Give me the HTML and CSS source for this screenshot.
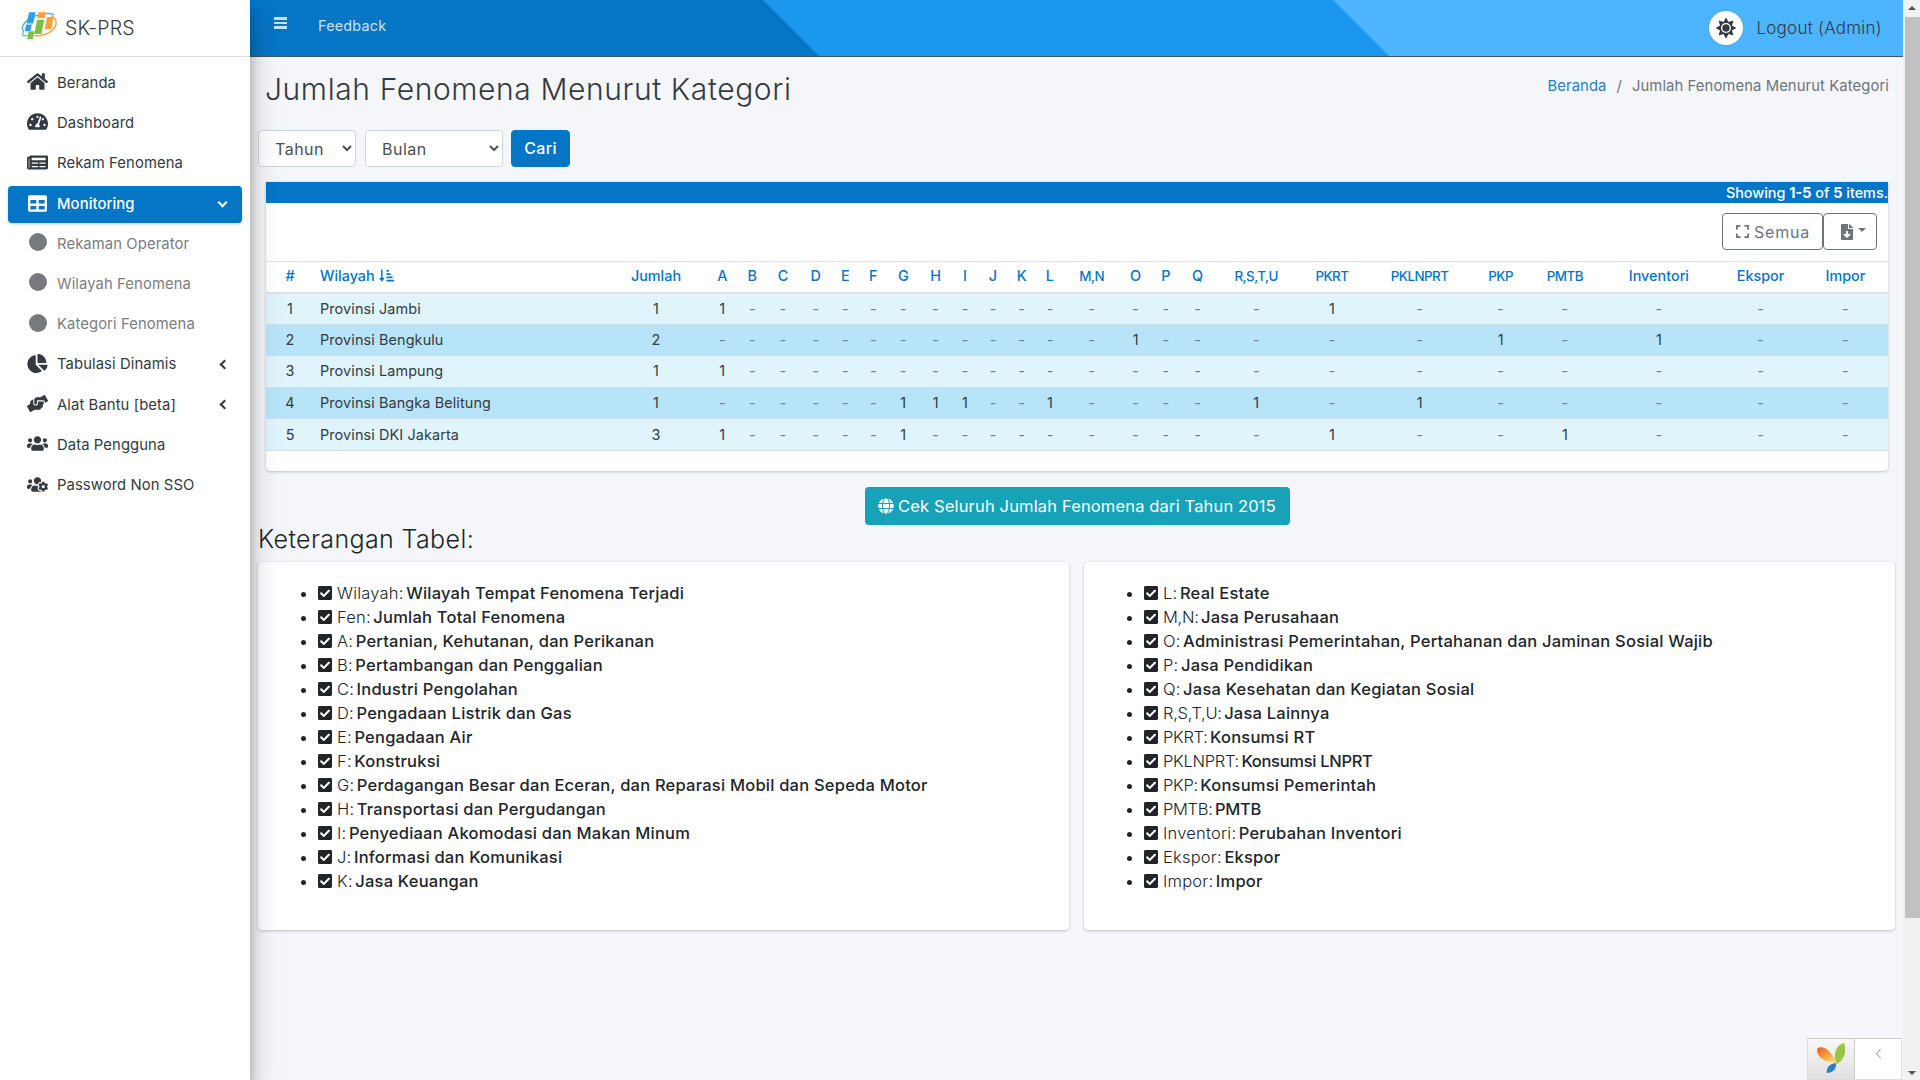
FILE: index.html
```html
<!DOCTYPE html>
<html lang="id">
<head>
<meta charset="utf-8">
<title>Jumlah Fenomena Menurut Kategori</title>
<link rel="stylesheet" href="styles.css">
</head>
<body>
<svg class="defs" aria-hidden="true">
<symbol id="i-home" viewBox="0 0 576 512"><path d="M280.37 148.26L96 300.11V464a16 16 0 0 0 16 16l112.06-.29a16 16 0 0 0 15.92-16V368a16 16 0 0 1 16-16h64a16 16 0 0 1 16 16v95.64a16 16 0 0 0 16 16.05L464 480a16 16 0 0 0 16-16V300L295.67 148.26a12.19 12.19 0 0 0-15.3 0zM571.6 251.47L488 182.56V44.05a12 12 0 0 0-12-12h-56a12 12 0 0 0-12 12v72.61L318.47 43a48 48 0 0 0-61 0L4.34 251.47a12 12 0 0 0-1.6 16.9l25.5 31A12 12 0 0 0 45.15 301l235.22-193.74a12.19 12.19 0 0 1 15.3 0L530.9 301a12 12 0 0 0 16.9-1.6l25.5-31a12 12 0 0 0-1.7-16.93z"/></symbol>
<symbol id="i-dash" viewBox="0 0 576 512"><path d="M288 32C128.94 32 0 160.94 0 320c0 52.8 14.25 102.26 39.06 144.8 5.61 9.62 16.3 15.2 27.44 15.2h443c11.14 0 21.83-5.58 27.44-15.2C561.75 422.26 576 372.8 576 320c0-159.06-128.94-288-288-288zm0 64c14.71 0 26.58 10.13 30.32 23.65-1.11 2.26-2.64 4.23-3.45 6.67l-9.22 27.67c-5.13 3.49-10.97 6.01-17.64 6.01-17.67 0-32-14.33-32-32S270.33 96 288 96zM96 384c-17.67 0-32-14.33-32-32s14.33-32 32-32 32 14.33 32 32-14.33 32-32 32zm48-160c-17.67 0-32-14.33-32-32s14.33-32 32-32 32 14.33 32 32-14.33 32-32 32zm246.77-72.41l-61.33 184C343.13 347.33 352 364.54 352 384c0 11.72-3.38 22.55-8.88 32H232.88c-5.5-9.45-8.88-20.28-8.88-32 0-33.94 26.5-61.43 59.9-63.59l61.34-184.01c4.17-12.56 17.73-19.45 30.36-15.17 12.57 4.19 19.35 17.79 15.17 30.36zm14.66 57.2l15.52-46.55c3.47-1.29 7.13-2.23 11.05-2.23 17.67 0 32 14.33 32 32s-14.33 32-32 32c-11.38-.01-20.89-6.28-26.57-15.22zM480 384c-17.67 0-32-14.33-32-32s14.33-32 32-32 32 14.33 32 32-14.33 32-32 32z"/></symbol>
<symbol id="i-news" viewBox="0 0 576 512"><path d="M552 64H88c-13.255 0-24 10.745-24 24v8H24c-13.255 0-24 10.745-24 24v272c0 30.928 25.072 56 56 56h472c26.51 0 48-21.49 48-48V88c0-13.255-10.745-24-24-24zM56 400a8 8 0 0 1-8-8V144h16v248a8 8 0 0 1-8 8zm236-16H140c-6.627 0-12-5.373-12-12v-8c0-6.627 5.373-12 12-12h152c6.627 0 12 5.373 12 12v8c0 6.627-5.373 12-12 12zm208 0H348c-6.627 0-12-5.373-12-12v-8c0-6.627 5.373-12 12-12h152c6.627 0 12 5.373 12 12v8c0 6.627-5.373 12-12 12zm-208-96H140c-6.627 0-12-5.373-12-12v-8c0-6.627 5.373-12 12-12h152c6.627 0 12 5.373 12 12v8c0 6.627-5.373 12-12 12zm208 0H348c-6.627 0-12-5.373-12-12v-8c0-6.627 5.373-12 12-12h152c6.627 0 12 5.373 12 12v8c0 6.627-5.373 12-12 12zm0-96H140c-6.627 0-12-5.373-12-12v-40c0-6.627 5.373-12 12-12h360c6.627 0 12 5.373 12 12v40c0 6.627-5.373 12-12 12z"/></symbol>
<symbol id="i-table" viewBox="0 0 512 512"><path d="M464 32H48C21.49 32 0 53.49 0 80v352c0 26.51 21.49 48 48 48h416c26.51 0 48-21.49 48-48V80c0-26.51-21.49-48-48-48zM224 416H64v-96h160v96zm0-160H64v-96h160v96zm224 160H288v-96h160v96zm0-160H288v-96h160v96z"/></symbol>
<symbol id="i-pie" viewBox="0 0 544 512"><path d="M527.79 288H290.5l158.03 158.03c6.04 6.04 15.98 6.53 22.19.68 38.7-36.46 65.32-85.61 73.13-140.86 1.34-9.46-6.51-17.85-16.06-17.85zm-15.83-64.8C503.72 103.74 408.26 8.28 288.8.04 279.68-.59 272 7.1 272 16.24V240h223.77c9.14 0 16.82-7.68 16.19-16.8zM224 288V50.71c0-9.55-8.39-17.4-17.84-16.06C86.99 51.49-4.1 155.6.14 280.37 4.5 408.51 114.83 513.59 243.03 511.98c50.4-.63 96.97-16.87 135.26-44.03 7.9-5.6 8.42-17.23 1.57-24.08L224 288z"/></symbol>
<symbol id="i-hands" viewBox="0 0 640 512"><path d="M488 192H336v56c0 39.7-32.3 72-72 72s-72-32.3-72-72V126.4l-64.9 39C107.8 176.9 96 197.8 96 220.2v47.3l-80 46.2C.7 322.5-4.6 342.1 4.3 357.4l80 138.6c8.8 15.3 28.4 20.5 43.7 11.7L231.4 448H368c35.3 0 64-28.7 64-64h16c17.7 0 32-14.3 32-32v-64h8c13.3 0 24-10.7 24-24v-48c0-13.3-10.7-24-24-24zm147.7-37.4L555.7 16C546.9.7 527.3-4.5 512 4.3L408.6 64H306.4c-12 0-23.7 3.4-33.9 9.7L239 94.6c-9.4 5.8-15 16.1-15 27.1V248c0 22.1 17.9 40 40 40s40-17.9 40-40v-88h184c30.9 0 56 25.1 56 56v28.5l80-46.2c15.3-8.9 20.5-28.4 11.7-43.7z"/></symbol>
<symbol id="i-users" viewBox="0 0 640 512"><path d="M96 224c35.3 0 64-28.7 64-64s-28.7-64-64-64-64 28.7-64 64 28.7 64 64 64zm448 0c35.3 0 64-28.7 64-64s-28.7-64-64-64-64 28.7-64 64 28.7 64 64 64zm32 32h-64c-17.6 0-33.5 7.1-45.1 18.6 40.3 22.1 68.9 62 75.1 109.4h66c17.7 0 32-14.3 32-32v-32c0-35.3-28.7-64-64-64zm-256 0c61.9 0 112-50.1 112-112S381.9 32 320 32 208 82.1 208 144s50.1 112 112 112zm76.8 32h-8.3c-20.8 10-43.9 16-68.5 16s-47.6-6-68.5-16h-8.3C179.6 288 128 339.6 128 403.2V432c0 26.5 21.5 48 48 48h288c26.5 0 48-21.5 48-48v-28.8c0-63.6-51.6-115.2-115.2-115.2zm-223.7-13.4C161.5 263.1 145.6 256 128 256H64c-35.3 0-64 28.7-64 64v32c0 17.7 14.3 32 32 32h65.9c6.3-47.4 34.9-87.3 75.2-109.4z"/></symbol>
<symbol id="i-ucog" viewBox="0 0 640 512"><path d="M610.5 341.3c2.6-14.1 2.6-28.5 0-42.6l25.8-14.9c3-1.7 4.3-5.2 3.3-8.5-6.7-21.6-18.2-41.2-33.2-57.4-2.3-2.5-6-3.1-9-1.4l-25.8 14.9c-10.9-9.3-23.4-16.5-36.9-21.3v-29.8c0-3.4-2.4-6.4-5.7-7.1-22.3-5-45-4.8-66.2 0-3.3.7-5.7 3.7-5.7 7.1v29.8c-13.5 4.8-26 12-36.9 21.3l-25.8-14.9c-2.9-1.7-6.7-1.1-9 1.4-15 16.2-26.5 35.8-33.2 57.4-1 3.3.4 6.8 3.3 8.5l25.8 14.9c-2.6 14.1-2.6 28.5 0 42.6l-25.8 14.9c-3 1.7-4.3 5.2-3.3 8.5 6.7 21.6 18.2 41.1 33.2 57.4 2.3 2.5 6 3.1 9 1.4l25.8-14.9c10.9 9.3 23.4 16.5 36.9 21.3v29.8c0 3.4 2.4 6.4 5.7 7.1 22.3 5 45 4.8 66.2 0 3.3-.7 5.7-3.7 5.7-7.1v-29.8c13.5-4.8 26-12 36.9-21.3l25.8 14.9c2.9 1.7 6.7 1.1 9-1.4 15-16.2 26.5-35.8 33.2-57.4 1-3.3-.4-6.8-3.3-8.5l-25.8-14.9zM496 368.5c-26.8 0-48.5-21.8-48.5-48.5s21.8-48.5 48.5-48.5 48.5 21.8 48.5 48.5-21.7 48.5-48.5 48.5zM96 224c35.3 0 64-28.7 64-64s-28.7-64-64-64-64 28.7-64 64 28.7 64 64 64zm224 32c1.9 0 3.7-.5 5.6-.6 8.3-21.7 20.5-42.1 36.3-59.2 7.4-8 17.9-12.6 28.9-12.6 6.9 0 13.7 1.8 19.6 5.3l7.9 4.6c.8-.5 1.6-.9 2.4-1.4 7-14.6 11.2-30.8 11.2-48 0-61.9-50.1-112-112-112S208 82.1 208 144c0 61.9 50.1 112 112 112zm105.2 194.5c-2.3-1.2-4.6-2.6-6.8-3.9-8.2 4.8-15.3 9.8-27.5 9.8-10.9 0-21.4-4.6-28.9-12.6-18.3-19.8-32.3-43.9-40.2-69.6-10.7-34.5 24.9-49.7 25.8-50.3-.1-2.6-.1-5.2 0-7.8l-7.9-4.6c-3.8-2.2-7-5-9.8-8.1-3.3.2-6.5.6-9.8.6-24.6 0-47.6-6-68.5-16h-8.3C179.6 288 128 339.6 128 403.2V432c0 26.5 21.5 48 48 48h255.4c-3.7-6-6.2-12.8-6.2-20.3v-9.2zM173.1 274.6C161.5 263.1 145.6 256 128 256H64c-35.3 0-64 28.7-64 64v32c0 17.7 14.3 32 32 32h65.9c6.3-47.4 34.9-87.3 75.2-109.4z"/></symbol>
<symbol id="i-sun" viewBox="0 0 512 512"><path d="M256 160c-52.9 0-96 43.1-96 96s43.1 96 96 96 96-43.1 96-96-43.1-96-96-96zm246.4 80.5l-94.7-47.3 33.5-100.4c4.5-13.6-8.4-26.5-21.9-21.9l-100.4 33.5-47.4-94.8c-6.4-12.8-24.6-12.8-31 0l-47.3 94.7L92.7 70.8c-13.6-4.5-26.5 8.4-21.9 21.9l33.5 100.4-94.7 47.4c-12.8 6.4-12.8 24.6 0 31l94.7 47.3-33.5 100.5c-4.5 13.6 8.4 26.5 21.9 21.9l100.4-33.5 47.3 94.7c6.4 12.8 24.6 12.8 31 0l47.3-94.7 100.4 33.5c13.6 4.5 26.5-8.4 21.9-21.9l-33.5-100.4 94.7-47.3c13-6.5 13-24.7.2-31.1zm-155.9 106c-49.9 49.9-131.1 49.9-181 0-49.9-49.9-49.9-131.1 0-181 49.9-49.9 131.1-49.9 181 0 49.9 49.9 49.9 131.1 0 181z"/></symbol>
<symbol id="i-check" viewBox="0 0 448 512"><path d="M400 480H48c-26.51 0-48-21.49-48-48V80c0-26.51 21.49-48 48-48h352c26.51 0 48 21.49 48 48v352c0 26.51-21.49 48-48 48zm-204.686-98.059l184-184c6.248-6.248 6.248-16.379 0-22.627l-22.627-22.627c-6.248-6.248-16.379-6.249-22.628 0L184 302.745l-70.059-70.059c-6.248-6.248-16.379-6.248-22.628 0l-22.627 22.627c-6.248 6.248-6.248 16.379 0 22.627l104 104c6.249 6.25 16.379 6.25 22.628.001z"/></symbol>
<symbol id="i-globe" viewBox="0 0 496 512"><path d="M336.5 160C322 70.7 287.8 8 248 8s-74 62.7-88.5 152h177zM152 256c0 22.2 1.2 43.5 3.3 64h185.3c2.1-20.5 3.3-41.8 3.3-64s-1.2-43.5-3.3-64H155.3c-2.1 20.5-3.3 41.8-3.3 64zm324.7-96c-28.6-67.9-86.5-120.4-158-141.6 24.4 33.8 41.2 84.7 50 141.6h108zM177.2 18.4C105.8 39.6 47.8 92.1 19.3 160h108c8.7-56.9 25.5-107.8 49.9-141.6zM487.4 192H372.7c2.1 21 3.3 42.5 3.3 64s-1.2 43-3.3 64h114.6c5.5-20.5 8.6-41.8 8.6-64s-3.1-43.5-8.5-64zM120 256c0-21.5 1.2-43 3.3-64H8.6C3.2 212.5 0 233.8 0 256s3.2 43.5 8.6 64h114.6c-2-21-3.2-42.5-3.2-64zm39.5 96c14.5 89.3 48.7 152 88.5 152s74-62.7 88.5-152h-177zm159.3 141.6c71.4-21.2 129.4-73.7 158-141.6h-108c-8.8 56.9-25.6 107.8-50 141.6zM19.3 352c28.6 67.9 86.5 120.4 158 141.6-24.4-33.8-41.2-84.7-50-141.6h-108z"/></symbol>
<symbol id="i-expand" viewBox="0 0 448 512"><path d="M0 180V56c0-13.3 10.7-24 24-24h124c6.6 0 12 5.4 12 12v40c0 6.6-5.4 12-12 12H64v84c0 6.6-5.4 12-12 12H12c-6.6 0-12-5.4-12-12zM288 44v40c0 6.6 5.4 12 12 12h84v84c0 6.6 5.4 12 12 12h40c6.6 0 12-5.4 12-12V56c0-13.3-10.7-24-24-24H300c-6.6 0-12 5.4-12 12zm148 276h-40c-6.6 0-12 5.4-12 12v84h-84c-6.6 0-12 5.4-12 12v40c0 6.6 5.4 12 12 12h124c13.3 0 24-10.7 24-24V332c0-6.6-5.4-12-12-12zM160 468v-40c0-6.6-5.4-12-12-12H64v-84c0-6.6-5.4-12-12-12H12c-6.6 0-12 5.4-12 12v124c0 13.3 10.7 24 24 24h124c6.6 0 12-5.4 12-12z"/></symbol>
<symbol id="i-file" viewBox="0 0 384 512"><path d="M224 136V0H24C10.7 0 0 10.7 0 24v464c0 13.3 10.7 24 24 24h336c13.3 0 24-10.7 24-24V160H248c-13.2 0-24-10.8-24-24zm76.45 211.36l-96.42 95.7c-6.65 6.61-17.39 6.61-24.04 0l-96.42-95.7C73.42 337.29 80.54 320 94.82 320H160v-80c0-8.84 7.16-16 16-16h32c8.84 0 16 7.16 16 16v80h65.18c14.28 0 21.4 17.29 11.27 27.36zM377 105L279.1 7c-4.5-4.5-10.6-7-17-7H256v128h128v-6.1c0-6.3-2.5-12.4-7-16.9z"/></symbol>
<linearGradient id="yii-petal" x1="0" y1="0" x2="1" y2="1"><stop offset="0" stop-color="#e8592b"/><stop offset=".55" stop-color="#f7a63f"/><stop offset="1" stop-color="#fde38a"/></linearGradient>
</svg>

<aside class="sidebar">
  <a class="brand">
    <svg class="logo" viewBox="0 0 40 30">
      <path d="M4 22 C-2 14 12 4 27 2.500 C32 2 35 3 36 4" fill="none" stroke="#4db3ea" stroke-width="1.500"/>
      <path d="M8 25 C3 27 1 25 4 22" fill="none" stroke="#4db3ea" stroke-width="1.300"/>
      <path d="M15 26 C27 26 39 20 38 11 C37.800 8 36 6 33 4.500" fill="none" stroke="#f3a640" stroke-width="1.500"/>
      <path d="M9.500 1H16.500L13.800 13H7z" fill="#2f9fe6"/>
      <path d="M6.500 14H12.500L11 21H5z" fill="#2f9fe6"/>
      <path d="M19.500 1H27.500L26.200 7H18.200z" fill="#f4a23c"/>
      <path d="M28.500 6H35.500L33 19H26z" fill="#f4a23c"/>
      <path d="M18 9H25.500L22.500 24H15z" fill="#7cc142"/>
      <path d="M9 21H15L13.500 29.500H7.500z" fill="#7cc142"/>
    </svg>
    <span class="brand-text">SK-PRS</span>
  </a>
  <nav class="nav">
    <a class="nav-link"><svg class="nav-icon"><use href="#i-home"/></svg><span>Beranda</span></a>
    <a class="nav-link"><svg class="nav-icon"><use href="#i-dash"/></svg><span>Dashboard</span></a>
    <a class="nav-link"><svg class="nav-icon"><use href="#i-news"/></svg><span>Rekam Fenomena</span></a>
    <a class="nav-link active"><svg class="nav-icon"><use href="#i-table"/></svg><span>Monitoring</span><i class="chev chev-down"></i></a>
    <a class="nav-link sub"><i class="dot"></i><span>Rekaman Operator</span></a>
    <a class="nav-link sub"><i class="dot"></i><span>Wilayah Fenomena</span></a>
    <a class="nav-link sub"><i class="dot"></i><span>Kategori Fenomena</span></a>
    <a class="nav-link"><svg class="nav-icon"><use href="#i-pie"/></svg><span>Tabulasi Dinamis</span><i class="chev chev-left"></i></a>
    <a class="nav-link"><svg class="nav-icon"><use href="#i-hands"/></svg><span>Alat Bantu [beta]</span><i class="chev chev-left"></i></a>
    <a class="nav-link"><svg class="nav-icon"><use href="#i-users"/></svg><span>Data Pengguna</span></a>
    <a class="nav-link"><svg class="nav-icon"><use href="#i-ucog"/></svg><span>Password Non SSO</span></a>
  </nav>
</aside>

<div class="main">
  <header class="topbar">
    <div class="topbar-left">
      <span class="bars"><i></i><i></i><i></i></span>
      <a class="feedback">Feedback</a>
    </div>
    <div class="topbar-right">
      <span class="sun"><svg><use href="#i-sun"/></svg></span>
      <a class="logout">Logout (Admin)</a>
    </div>
  </header>

  <main class="content">
    <div class="page-head">
      <h1>Jumlah Fenomena Menurut Kategori</h1>
      <div class="crumbs"><a>Beranda</a><span class="sep">/</span><span>Jumlah Fenomena Menurut Kategori</span></div>
    </div>

    <form class="filter">
      <select class="sel sel-year"><option>Tahun</option></select>
      <select class="sel sel-month"><option>Bulan</option></select>
      <button type="button" class="btn-cari">Cari</button>
    </form>

    <section class="grid-card">
      <div class="summary">Showing <b>1-5</b> of <b>5</b> items.</div>
      <div class="toolbar">
        <button type="button" class="tool tool-all"><svg class="tool-ic"><use href="#i-expand"/></svg>Semua</button>
        <button type="button" class="tool tool-exp"><svg class="tool-file"><use href="#i-file"/></svg><i class="caret"></i></button>
      </div>
      <table class="data">
        <colgroup><col><col><col><col><col><col><col><col><col><col><col><col><col><col><col><col><col><col><col><col><col><col><col><col><col><col><col></colgroup>
        <thead><tr><th>#</th><th class="left">Wilayah <svg class="sort" viewBox="0 0 16 14"><path d="M3 0.500V12M0.800 9.500L3 12.500L5.200 9.500" fill="none" stroke="currentColor" stroke-width="1.600"/><path d="M8 1h2.500v2H8zM8 4.500h4.500v2H8zM8 8h6.500v2H8zM8 11.500h8v2H8z"/></svg></th><th>Jumlah</th><th>A</th><th>B</th><th>C</th><th>D</th><th>E</th><th>F</th><th>G</th><th>H</th><th>I</th><th>J</th><th>K</th><th>L</th><th class="caps">M,N</th><th>O</th><th>P</th><th>Q</th><th class="caps">R,S,T,U</th><th class="caps">PKRT</th><th class="caps">PKLNPRT</th><th class="caps">PKP</th><th class="caps">PMTB</th><th>Inventori</th><th>Ekspor</th><th>Impor</th></tr></thead>
        <tbody>
          <tr><td>1</td><td class="left">Provinsi Jambi</td><td>1</td><td>1</td><td class="nil">-</td><td class="nil">-</td><td class="nil">-</td><td class="nil">-</td><td class="nil">-</td><td class="nil">-</td><td class="nil">-</td><td class="nil">-</td><td class="nil">-</td><td class="nil">-</td><td class="nil">-</td><td class="nil">-</td><td class="nil">-</td><td class="nil">-</td><td class="nil">-</td><td class="nil">-</td><td>1</td><td class="nil">-</td><td class="nil">-</td><td class="nil">-</td><td class="nil">-</td><td class="nil">-</td><td class="nil">-</td></tr>
          <tr><td>2</td><td class="left">Provinsi Bengkulu</td><td>2</td><td class="nil">-</td><td class="nil">-</td><td class="nil">-</td><td class="nil">-</td><td class="nil">-</td><td class="nil">-</td><td class="nil">-</td><td class="nil">-</td><td class="nil">-</td><td class="nil">-</td><td class="nil">-</td><td class="nil">-</td><td class="nil">-</td><td>1</td><td class="nil">-</td><td class="nil">-</td><td class="nil">-</td><td class="nil">-</td><td class="nil">-</td><td>1</td><td class="nil">-</td><td>1</td><td class="nil">-</td><td class="nil">-</td></tr>
          <tr><td>3</td><td class="left">Provinsi Lampung</td><td>1</td><td>1</td><td class="nil">-</td><td class="nil">-</td><td class="nil">-</td><td class="nil">-</td><td class="nil">-</td><td class="nil">-</td><td class="nil">-</td><td class="nil">-</td><td class="nil">-</td><td class="nil">-</td><td class="nil">-</td><td class="nil">-</td><td class="nil">-</td><td class="nil">-</td><td class="nil">-</td><td class="nil">-</td><td class="nil">-</td><td class="nil">-</td><td class="nil">-</td><td class="nil">-</td><td class="nil">-</td><td class="nil">-</td><td class="nil">-</td></tr>
          <tr><td>4</td><td class="left">Provinsi Bangka Belitung</td><td>1</td><td class="nil">-</td><td class="nil">-</td><td class="nil">-</td><td class="nil">-</td><td class="nil">-</td><td class="nil">-</td><td>1</td><td>1</td><td>1</td><td class="nil">-</td><td class="nil">-</td><td>1</td><td class="nil">-</td><td class="nil">-</td><td class="nil">-</td><td class="nil">-</td><td>1</td><td class="nil">-</td><td>1</td><td class="nil">-</td><td class="nil">-</td><td class="nil">-</td><td class="nil">-</td><td class="nil">-</td></tr>
          <tr><td>5</td><td class="left">Provinsi DKI Jakarta</td><td>3</td><td>1</td><td class="nil">-</td><td class="nil">-</td><td class="nil">-</td><td class="nil">-</td><td class="nil">-</td><td>1</td><td class="nil">-</td><td class="nil">-</td><td class="nil">-</td><td class="nil">-</td><td class="nil">-</td><td class="nil">-</td><td class="nil">-</td><td class="nil">-</td><td class="nil">-</td><td class="nil">-</td><td>1</td><td class="nil">-</td><td class="nil">-</td><td>1</td><td class="nil">-</td><td class="nil">-</td><td class="nil">-</td></tr>
        </tbody>
      </table>
    </section>

    <div class="all-wrap"><a class="btn-all"><svg class="globe"><use href="#i-globe"/></svg>Cek Seluruh Jumlah Fenomena dari Tahun 2015</a></div>

    <h2 class="legend-title">Keterangan Tabel:</h2>
    <div class="legend">
      <div class="legend-card"><ul>
        <li><svg class="ck"><use href="#i-check"/></svg>Wilayah: <b>Wilayah Tempat Fenomena Terjadi</b></li>
        <li><svg class="ck"><use href="#i-check"/></svg>Fen: <b>Jumlah Total Fenomena</b></li>
        <li><svg class="ck"><use href="#i-check"/></svg>A: <b>Pertanian, Kehutanan, dan Perikanan</b></li>
        <li><svg class="ck"><use href="#i-check"/></svg>B: <b>Pertambangan dan Penggalian</b></li>
        <li><svg class="ck"><use href="#i-check"/></svg>C: <b>Industri Pengolahan</b></li>
        <li><svg class="ck"><use href="#i-check"/></svg>D: <b>Pengadaan Listrik dan Gas</b></li>
        <li><svg class="ck"><use href="#i-check"/></svg>E: <b>Pengadaan Air</b></li>
        <li><svg class="ck"><use href="#i-check"/></svg>F: <b>Konstruksi</b></li>
        <li><svg class="ck"><use href="#i-check"/></svg>G: <b>Perdagangan Besar dan Eceran, dan Reparasi Mobil dan Sepeda Motor</b></li>
        <li><svg class="ck"><use href="#i-check"/></svg>H: <b>Transportasi dan Pergudangan</b></li>
        <li><svg class="ck"><use href="#i-check"/></svg>I: <b>Penyediaan Akomodasi dan Makan Minum</b></li>
        <li><svg class="ck"><use href="#i-check"/></svg>J: <b>Informasi dan Komunikasi</b></li>
        <li><svg class="ck"><use href="#i-check"/></svg>K: <b>Jasa Keuangan</b></li>
      </ul></div>
      <div class="legend-card"><ul>
        <li><svg class="ck"><use href="#i-check"/></svg>L: <b>Real Estate</b></li>
        <li><svg class="ck"><use href="#i-check"/></svg><span class="tight">M,N:</span> <b>Jasa Perusahaan</b></li>
        <li><svg class="ck"><use href="#i-check"/></svg>O: <b>Administrasi Pemerintahan, Pertahanan dan Jaminan Sosial Wajib</b></li>
        <li><svg class="ck"><use href="#i-check"/></svg>P: <b>Jasa Pendidikan</b></li>
        <li><svg class="ck"><use href="#i-check"/></svg>Q: <b>Jasa Kesehatan dan Kegiatan Sosial</b></li>
        <li><svg class="ck"><use href="#i-check"/></svg><span class="tight">R,S,T,U:</span> <b>Jasa Lainnya</b></li>
        <li><svg class="ck"><use href="#i-check"/></svg><span class="tight">PKRT:</span> <b>Konsumsi RT</b></li>
        <li><svg class="ck"><use href="#i-check"/></svg><span class="tight">PKLNPRT:</span> <b class="tight">Konsumsi LNPRT</b></li>
        <li><svg class="ck"><use href="#i-check"/></svg><span class="tight">PKP:</span> <b>Konsumsi Pemerintah</b></li>
        <li><svg class="ck"><use href="#i-check"/></svg><span class="tight">PMTB:</span> <b class="tight">PMTB</b></li>
        <li><svg class="ck"><use href="#i-check"/></svg>Inventori: <b>Perubahan Inventori</b></li>
        <li><svg class="ck"><use href="#i-check"/></svg>Ekspor: <b>Ekspor</b></li>
        <li><svg class="ck"><use href="#i-check"/></svg>Impor: <b>Impor</b></li>
      </ul></div>
    </div>
  </main>
</div>

<div class="scrollbar"><i class="arrow-up"></i><div class="thumb"></div><i class="arrow-down"></i></div>

<div class="yii">
  <div class="yii-logo"><svg viewBox="0 0 28 30">
    <path d="M0 6 C4 2 12 5 19 18 C19 19 18 20 17 19.500 C10 19 0 16 0 6z" fill="url(#yii-petal)"/>
    <path d="M20 21 C15 12 19 2 27 0 C30 7 28 16 20 21z" fill="#9ac53d"/>
    <path d="M19 20 C20 27 14 30 10 30 C9 25 12 21 19 20z" fill="#2a7fc8"/>
  </svg></div>
  <div class="yii-toggle"><i></i></div>
</div>
</body>
</html>
```
FILE: styles.css
```css
* { box-sizing: border-box; }
html, body { margin: 0; height: 1080px; overflow: hidden; }
body {
  display: flex;
  font-family: Inter, "Noto Sans", "Liberation Sans", sans-serif;
  font-size: 16px;
  color: #212529;
  background: #f4f6f9;
}
.defs { position: absolute; width: 0; height: 0; }
a { text-decoration: none; color: inherit; }
svg { fill: currentColor; display: block; }

/* sidebar */
.sidebar {
  width: 250px;
  flex: none;
  height: 1080px;
  background: #fff;
  position: relative;
  z-index: 5;
  box-shadow: 0 14px 28px rgba(0,0,0,.25), 0 10px 10px rgba(0,0,0,.22);
}
.brand {
  height: 57px;
  display: flex;
  align-items: center;
  padding-left: 20px;
  border-bottom: 1px solid #dee2e6;
}
.logo { width: 38px; height: 29px; margin-top: -6px; fill: none; }
.brand-text { margin-left: 7px; font-size: 19.5px; font-weight: 300; color: #343a40; letter-spacing: .2px; }
.nav { padding: 7px 8px 0; display: flex; flex-direction: column; gap: 3.25px; }
.nav-link {
  height: 37px;
  display: flex;
  align-items: center;
  border-radius: 4px;
  padding-left: 20px;
  font-size: 14.8px;
  color: #343a40;
  position: relative;
}
.nav-icon { width: 21px; height: 19px; margin-top: -2px; flex: none; margin-right: 9px; margin-left: -1px; }
.nav-link span { letter-spacing: .1px; }
.nav-link.active { background: #0575c6; color: #fff; font-weight: 500; box-shadow: 0 1px 3px rgba(0,0,0,.2); margin: 1px 0 -1px; }
.nav-link.sub { color: #7a7d82; }
.dot { width: 18px; height: 18px; border-radius: 50%; background: #77797c; margin: -3px 10px 0 1px; flex: none; }
.chev { position: absolute; right: 17px; width: 7px; height: 7px; border-left: 2.200px solid currentColor; border-bottom: 2.200px solid currentColor; }
.chev-down { transform: rotate(-45deg); top: 13px; right: 16px; }
.chev-left { transform: rotate(45deg); top: 15px; right: 14px; }

/* main */
.main { flex: 1; min-width: 0; display: flex; flex-direction: column; }
.topbar {
  height: 57px;
  flex: none;
  background: #0575c6;
  border-bottom: 1px solid #4b545c;
  display: flex;
  justify-content: space-between;
  position: relative;
  overflow: hidden;
}
.topbar::before, .topbar::after {
  content: "";
  position: absolute;
  top: 0; bottom: 0; right: 0;
  clip-path: polygon(0 0, 100% 0, 100% 100%, 56px 100%);
}
.topbar::before { left: 513px; background: #1b98ee; }
.topbar::after { left: 1083px; background: #4db4ff; }
.topbar-left, .topbar-right { position: relative; z-index: 1; display: flex; align-items: center; }
.topbar-left { padding-left: 24px; margin-top: -5px; }
.bars { width: 13px; display: flex; flex-direction: column; gap: 2px; margin-top: -5px; }
.bars i { height: 2.500px; background: #c8e2f5; display: block; }
.feedback { margin-left: 31px; font-size: 14.4px; color: rgba(255,255,255,.8); letter-spacing: .2px; }
.topbar-right { padding-right: 21px; }
.sun { width: 34px; height: 34px; border-radius: 50%; background: #fff; display: flex; align-items: center; justify-content: center; color: #343a40; margin-right: 13px; box-shadow: 0 0 2px rgba(0,0,0,.15); }
.sun svg { width: 20px; height: 20px; }
.logout { font-size: 17px; color: #343a40; font-weight: 350; letter-spacing: .25px; }

.content { flex: 1; padding: 0 7px 0 8px; min-height: 0; }
.page-head { display: flex; justify-content: space-between; align-items: flex-start; padding: 15px 7px 0 7px; height: 73px; }
h1 { margin: 0; font-size: 30px; font-weight: 350; line-height: 34px; color: #343a40; letter-spacing: .6px; }
.crumbs { font-size: 14.8px; color: #6c757d; margin-top: 4px; display: flex; line-height: 20px; letter-spacing: .1px; }
.crumbs a { color: #1f7fc4; }
.sep { margin: 0 10px; }

.filter { display: flex; height: 37px; }
.sel {
  height: 37px;
  border: 1px solid #ced4da;
  border-radius: 4px;
  background: #fff;
  font: inherit;
  color: #495057;
  letter-spacing: .5px;
  padding: 0 8px 0 12px;
}
.sel-year { width: 98px; margin-right: 9px; }
.sel-month { width: 138px; margin-right: 8px; }
.btn-cari { width: 59px; height: 37px; border: 1px solid #0575c6; border-radius: 4px; background: #0575c6; color: #fff; font: inherit; font-weight: 500; padding: 0 0 2px; letter-spacing: .3px; }

.grid-card {
  margin: 15px 8px 0 8px;
  height: 289px;
  background: #fff;
  border-radius: 0 0 4px 4px;
  box-shadow: 0 0 1px rgba(0,0,0,.13), 0 1px 3px rgba(0,0,0,.2);
}
.summary { height: 21px; background: #0575c6; color: #fff; text-align: right; font-size: 14.4px; font-weight: 500; line-height: 21px; }
.summary b { font-weight: 700; }
.toolbar { height: 58px; display: flex; justify-content: flex-end; padding: 10px 11px 0 0; }
.tool { height: 37px; background: #fff; border: 1px solid #6c757d; border-radius: 4px; color: #6c757d; font: inherit; display: flex; align-items: center; letter-spacing: .8px; }
.tool-all { width: 101px; padding: 0 0 0 12px; }
.tool-ic { width: 15px; height: 15px; margin-right: 4px; }
.tool-exp { width: 54px; padding: 0 0 0 17px; }
.tool-file { width: 12px; height: 16px; }
.caret { width: 0; height: 0; border: 4.500px solid transparent; border-top-color: #6c757d; border-bottom: 0; margin-left: 5px; margin-top: -3px; }

.data { width: 1622px; border-collapse: collapse; table-layout: fixed; font-size: 14.4px; }
.data th, .data td { padding: 0; text-align: center; white-space: nowrap; }
.data .left { text-align: left; padding-left: 6px; }
.data th { height: 31px; color: #0575c6; font-weight: 500; border-top: 1px solid #dee2e6; border-bottom: 2px solid #dee2e6; padding-bottom: 2px; }
.data th.caps { font-size: 13.4px; letter-spacing: -.55px; }
.data td { height: 31.600px; border-bottom: 1px solid #d5dde2; color: #343a40; font-weight: 400; padding-bottom: 1px; }
.data td.left { letter-spacing: .12px; }
.data .nil { color: #777e85; }
.data tbody tr:nth-child(odd) { background: #e0f4fc; }
.data tbody tr:nth-child(even) { background: #b8e4f9; }
.sort { display: inline-block; width: 15px; height: 13px; vertical-align: -1px; margin-left: 1px; }
col:nth-child(1) { width: 48px; } col:nth-child(2) { width: 291.2px; } col:nth-child(3) { width: 101.6px; }
col:nth-child(4) { width: 31px; } col:nth-child(5) { width: 29px; } col:nth-child(6) { width: 32.4px; }
col:nth-child(7) { width: 33px; } col:nth-child(8) { width: 26.2px; } col:nth-child(9) { width: 29.8px; }
col:nth-child(10) { width: 30.2px; } col:nth-child(11) { width: 34.6px; } col:nth-child(12) { width: 24px; }
col:nth-child(13) { width: 32px; } col:nth-child(14) { width: 25.4px; } col:nth-child(15) { width: 31.2px; }
col:nth-child(16) { width: 52.2px; } col:nth-child(17) { width: 35.8px; } col:nth-child(18) { width: 24.8px; }
col:nth-child(19) { width: 38.6px; } col:nth-child(20) { width: 78.6px; } col:nth-child(21) { width: 72.8px; }
col:nth-child(22) { width: 102.6px; } col:nth-child(23) { width: 59.4px; } col:nth-child(24) { width: 69.2px; }
col:nth-child(25) { width: 118.8px; } col:nth-child(26) { width: 84.6px; } col:nth-child(27) { width: 85px; }

.all-wrap { display: flex; justify-content: center; margin-top: 16px; }
.btn-all { width: 425px; height: 38px; background: #17a2b8; color: #fff; border-radius: 4px; display: flex; align-items: center; justify-content: center; font-size: 16.5px; letter-spacing: .15px; }
.globe { width: 16px; height: 16px; margin-right: 4px; }

.legend-title { margin: 0 0 8px; font-size: 25px; font-weight: 350; line-height: 29px; color: #212529; letter-spacing: .38px; }
.legend { display: grid; grid-template-columns: 811px 811px; gap: 15px; }
.legend-card { height: 368px; background: #fff; border-radius: 4px; padding: 19px 20px 0; box-shadow: 0 0 1px rgba(0,0,0,.13), 0 1px 3px rgba(0,0,0,.2); }
.legend-card ul { margin: 0; padding-left: 40px; }
.legend-card li { height: 24px; line-height: 24px; font-size: 16.5px; font-weight: 300; white-space: nowrap; letter-spacing: .22px; }
.legend-card li b { font-weight: 500; margin-left: -2.4px; }
.legend-card li .tight { letter-spacing: -.3px; }
.ck { display: inline-block; width: 14px; height: 16px; vertical-align: -2px; margin-right: 5px; color: #212529; }

/* page scrollbar */
.scrollbar { width: 17px; flex: none; background: #f1f1f1; height: 1080px; display: flex; flex-direction: column; align-items: center; justify-content: space-between; padding: 6px 0 5px; position: relative; z-index: 6; }
.thumb { position: absolute; top: 17px; left: 2px; right: 0; height: 901px; background: #c1c1c1; }
.arrow-up { width: 0; height: 0; border: 4px solid transparent; border-bottom: 4px solid #505050; border-top: 0; }
.arrow-down { width: 0; height: 0; border: 4px solid transparent; border-top: 4px solid #505050; border-bottom: 0; }

/* debug toolbar */
.yii { position: fixed; right: 18px; bottom: 0; width: 95px; height: 42px; display: flex; border-top: 1px solid #ccc; border-left: 1px solid #ddd; border-right: 1px solid #ddd; border-bottom: 1px solid #ddd; background: #fff; z-index: 8; }
.yii-logo { width: 47px; height: 40px; background: linear-gradient(#f7f7f7, #e0e0e0); border-right: 1px solid #ccc; padding: 4px 9px; }
.yii-logo svg { width: 28px; height: 30px; }
.yii-toggle { flex: 1; display: flex; align-items: center; justify-content: center; }
.yii-toggle i { width: 7px; height: 7px; border-left: 1px solid #aaa; border-bottom: 1px solid #aaa; transform: rotate(45deg); margin: -12px 0 0 4px; }
```
